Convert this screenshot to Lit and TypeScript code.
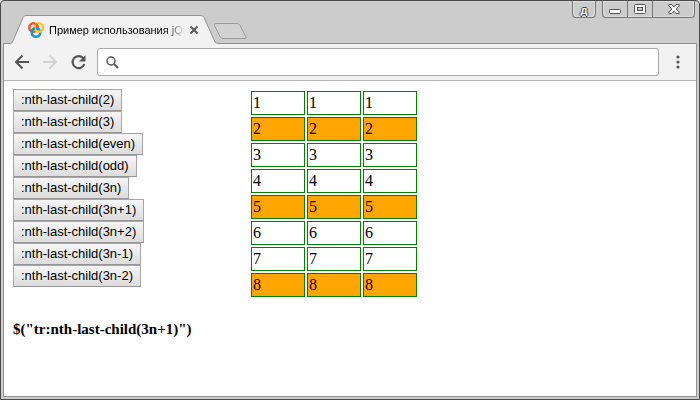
import { LitElement, html, css, svg } from "lit";
import { customElement, state } from "lit/decorators.js";
import { classMap } from "lit/directives/class-map.js";

const SELECTORS = ["2", "3", "even", "odd", "3n", "3n+1", "3n+2", "3n-1", "3n-2"];
const ROWS = [1, 2, 3, 4, 5, 6, 7, 8];

/** Tells whether a row, counted from the end, is picked by an nth expression. */
function picks(expr: string, fromEnd: number): boolean {
  if (expr === "even") return fromEnd % 2 === 0;
  if (expr === "odd") return fromEnd % 2 === 1;
  const m = /^(\d+)n([+-]\d+)?$/.exec(expr);
  if (!m) return fromEnd === Number(expr);
  const rest = fromEnd - Number(m[2] ?? 0);
  return rest >= 0 && rest % Number(m[1]) === 0;
}

@customElement("browser-tabs")
export class BrowserTabs extends LitElement {
  static styles = css`
    :host {
      display: flex;
      align-items: flex-end;
      height: 42px;
      position: relative;
      font-family: "Liberation Sans", sans-serif;
    }
    .tab {
      position: relative;
      display: flex;
      align-items: center;
      width: 211px;
      height: 29px;
      margin: 0 0 -1px 4px;
      padding: 0 17px 0 20px;
      box-sizing: border-box;
      z-index: 1;
    }
    .shape {
      position: absolute;
      inset: 0;
      z-index: -1;
    }
    .title {
      flex: 1;
      margin-left: 5px;
      overflow: hidden;
      white-space: nowrap;
      font-size: 11px;
      line-height: 16px;
      color: #000;
      mask-image: linear-gradient(to right, #000 116px, transparent 136px);
    }
    button {
      display: flex;
      align-items: center;
      justify-content: center;
      padding: 0;
      border: 0;
      background: none;
    }
    .close {
      width: 16px;
      height: 16px;
    }
    .new {
      margin: 0 0 3px -7px;
    }
    .controls {
      position: absolute;
      top: 0;
      right: 1px;
      display: flex;
      gap: 6px;
    }
    .group {
      display: flex;
      height: 17px;
      box-sizing: border-box;
      border: 1px solid #777;
      border-top: 0;
      border-radius: 0 0 4px 4px;
      box-shadow: inset 0 0 0 1px #dcdcdc;
    }
    .group button {
      width: 24px;
    }
    .group button + button {
      border-left: 1px solid #777;
      width: 25px;
    }
    .group button.exit {
      width: 42px;
    }
    .group .lang {
      width: 22px;
      padding-top: 2px;
      font: bold 11px/14px "Liberation Sans", sans-serif;
      color: #fff;
      text-shadow: 1px 0 #444, -1px 0 #444, 0 1px #444, 0 -1px #444;
    }
  `;

  render() {
    return html`
      <div class="tab">
        <svg class="shape" width="211" height="29" viewBox="0 0 211 29">
          <path d="M0 28.5H2Q4 28.5 5 26L15 2.5Q16 .5 18 .5H193Q195 .5 196 2.5L207 27Q208 28.5 211 28.5V29H0Z" fill="#f2f2f2" />
          <path d="M0 28.5H2Q4 28.5 5 26L15 2.5Q16 .5 18 .5H193Q195 .5 196 2.5L207 27Q208 28.5 211 28.5" fill="none" stroke="#929292" />
        </svg>
        <svg width="16" height="16" viewBox="0 0 16 16" fill="none" stroke-width="2.5">
          <circle cx="5.5" cy="5.5" r="4.2" stroke="#f0592a" />
          <circle cx="8" cy="10.5" r="4.3" stroke="#1598d5" />
          <circle cx="10.8" cy="5.5" r="4.2" stroke="#fdc52d" />
          <path d="M7.6 1.8A4.2 4.2 0 0 1 9.6 5" stroke="#f0592a" />
          <path d="M3.8 9.5A4.3 4.3 0 0 1 7 6.3" stroke="#1598d5" />
        </svg>
        <span class="title">Пример использования jQu</span>
        <button class="close" aria-label="Закрыть вкладку">
          <svg width="10" height="10" viewBox="0 0 10 10"><path d="M1.5 1.5L8.5 8.5M8.5 1.5L1.5 8.5" stroke="#5a5a5a" stroke-width="2" /></svg>
        </button>
      </div>
      <button class="new" aria-label="Новая вкладка">
        <svg width="36" height="18" viewBox="0 0 36 18">
          <path d="M3.5 1.5H25Q27 1.5 28 3.5L34 15Q34.5 16.5 33 16.5H11Q9 16.5 8 14.5L2.5 3.5Q2 1.5 3.5 1.5Z" fill="#d2d2d2" stroke="#9b9b9b" />
        </svg>
      </button>
      <div class="controls">
        <div class="group"><button class="lang">д</button></div>
        <div class="group">
          <button aria-label="Свернуть">
            <svg width="12" height="16" viewBox="0 0 12 16"><rect x=".5" y="8.5" width="11" height="4" rx="1" fill="#fff" stroke="#555" /></svg>
          </button>
          <button aria-label="Развернуть">
            <svg width="12" height="16" viewBox="0 0 12 16">
              <rect x=".5" y="3.5" width="11" height="9" rx="1" fill="#fff" stroke="#555" />
              <rect x="3.5" y="6.5" width="5" height="3" fill="#ccc" stroke="#555" />
            </svg>
          </button>
          <button class="exit" aria-label="Закрыть">
            <svg width="12" height="16" viewBox="0 0 12 16">
              <path d="M.8 3.5H4L6 6L8 3.5H11.2V5L8.2 8L11.2 11V12.5H8L6 10L4 12.5H.8V11L3.8 8L.8 5Z" fill="#fff" stroke="#555" />
            </svg>
          </button>
        </div>
      </div>
    `;
  }
}

@customElement("browser-toolbar")
export class BrowserToolbar extends LitElement {
  static styles = css`
    :host {
      display: flex;
      align-items: center;
      height: 36px;
      padding: 0 8px;
      background: #f2f2f2;
      border: solid #929292;
      border-width: 1px 0;
      border-bottom-color: #b4b4b4;
    }
    button {
      display: flex;
      align-items: center;
      justify-content: center;
      width: 20px;
      height: 28px;
      padding: 0;
      border: 0;
      background: none;
    }
    .nav {
      display: flex;
      gap: 8px;
      margin-right: 9px;
    }
    .omnibox {
      flex: 1;
      display: flex;
      align-items: center;
      gap: 6px;
      height: 28px;
      box-sizing: border-box;
      padding: 0 8px;
      border: 1px solid #a9a9a9;
      border-radius: 3px;
      background: #fff;
      margin-right: 9px;
    }
    input {
      flex: 1;
      min-width: 0;
      padding: 0;
      border: 0;
      outline: 0;
      background: none;
      font: 14px/20px "Liberation Sans", sans-serif;
    }
  `;

  render() {
    const arrow = svg`<path d="M15 8H2.5M8.5 1.5L2 8L8.5 14.5" fill="none" stroke-width="2" />`;
    return html`
      <div class="nav">
        <button aria-label="Назад">
          <svg width="16" height="16" viewBox="0 0 16 16" stroke="#555">${arrow}</svg>
        </button>
        <button aria-label="Вперёд">
          <svg width="16" height="16" viewBox="0 0 16 16" stroke="#d3d3d3"><g transform="rotate(180 8 8)">${arrow}</g></svg>
        </button>
        <button aria-label="Обновить">
          <svg width="16" height="16" viewBox="0 0 16 16">
            <path d="M14.3 10A6 6 0 1 1 13 4" fill="none" stroke="#555" stroke-width="2.2" />
            <path d="M15.5 1V7.5H9Z" fill="#555" />
          </svg>
        </button>
      </div>
      <label class="omnibox">
        <svg width="13" height="13" viewBox="0 0 13 13" fill="none" stroke="#555">
          <circle cx="5" cy="5" r="4" stroke-width="1.5" />
          <path d="M8 8L12 12" stroke-width="2" />
        </svg>
        <input type="text" aria-label="Адрес" />
      </label>
      <button aria-label="Меню">
        <svg width="4" height="14" viewBox="0 0 4 14" fill="#555">
          <circle cx="2" cy="2" r="1.6" /><circle cx="2" cy="7" r="1.6" /><circle cx="2" cy="12" r="1.6" />
        </svg>
      </button>
    `;
  }
}

@customElement("app-root")
export class AppRoot extends LitElement {
  static styles = css`
    :host {
      display: flex;
      min-height: 100vh;
      box-sizing: border-box;
      border: 1px solid #4a4a4a;
      border-radius: 4px 4px 0 0;
      background: #ccc;
      padding: 0 2px 2px;
      font-family: "Liberation Serif", serif;
      color: #000;
    }
    .window {
      flex: 1;
      min-width: 0;
      display: flex;
      flex-direction: column;
    }
    .frame {
      flex: 1;
      display: flex;
      flex-direction: column;
      border: solid #929292;
      border-width: 0 1px 1px;
      background: #fff;
    }
    browser-tabs {
      margin: 0 1px;
    }
    .page {
      padding: 8px 9px;
    }
    .demo {
      display: flex;
      align-items: flex-start;
    }
    .buttons {
      display: flex;
      flex-direction: column;
      align-items: flex-start;
      width: 236px;
    }
    .buttons button {
      height: 22px;
      padding: 0 7px;
      border: 1px solid #a6a6a6;
      border-bottom-color: #969696;
      border-radius: 0;
      background: linear-gradient(#f6f6f6, #dcdcdc);
      font: 13px/20px "Liberation Sans", sans-serif;
      color: #000;
    }
    table {
      border-spacing: 2px;
      font-size: 16px;
      line-height: 20px;
    }
    td {
      width: 50px;
      padding: 1px;
      border: 1px solid #008000;
    }
    .picked td {
      background: #ffa500;
    }
    h1 {
      margin: 20px 0 0;
      font-size: 15px;
      line-height: 20px;
    }
  `;

  @state() private expr = "3n+1";

  render() {
    return html`
      <div class="window">
        <browser-tabs></browser-tabs>
        <div class="frame">
          <browser-toolbar></browser-toolbar>
          <main class="page">
            <div class="demo">
              <div class="buttons">
                ${SELECTORS.map(
                  (s) => html`<button @click=${() => (this.expr = s)}>:nth-last-child(${s})</button>`
                )}
              </div>
              <table>
                <tbody>
                  ${ROWS.map(
                    (n) => html`<tr class=${classMap({ picked: picks(this.expr, ROWS.length + 1 - n) })}>
                      <td>${n}</td><td>${n}</td><td>${n}</td>
                    </tr>`
                  )}
                </tbody>
              </table>
            </div>
            <h1>$("tr:nth-last-child(${this.expr})")</h1>
          </main>
        </div>
      </div>
    `;
  }
}
